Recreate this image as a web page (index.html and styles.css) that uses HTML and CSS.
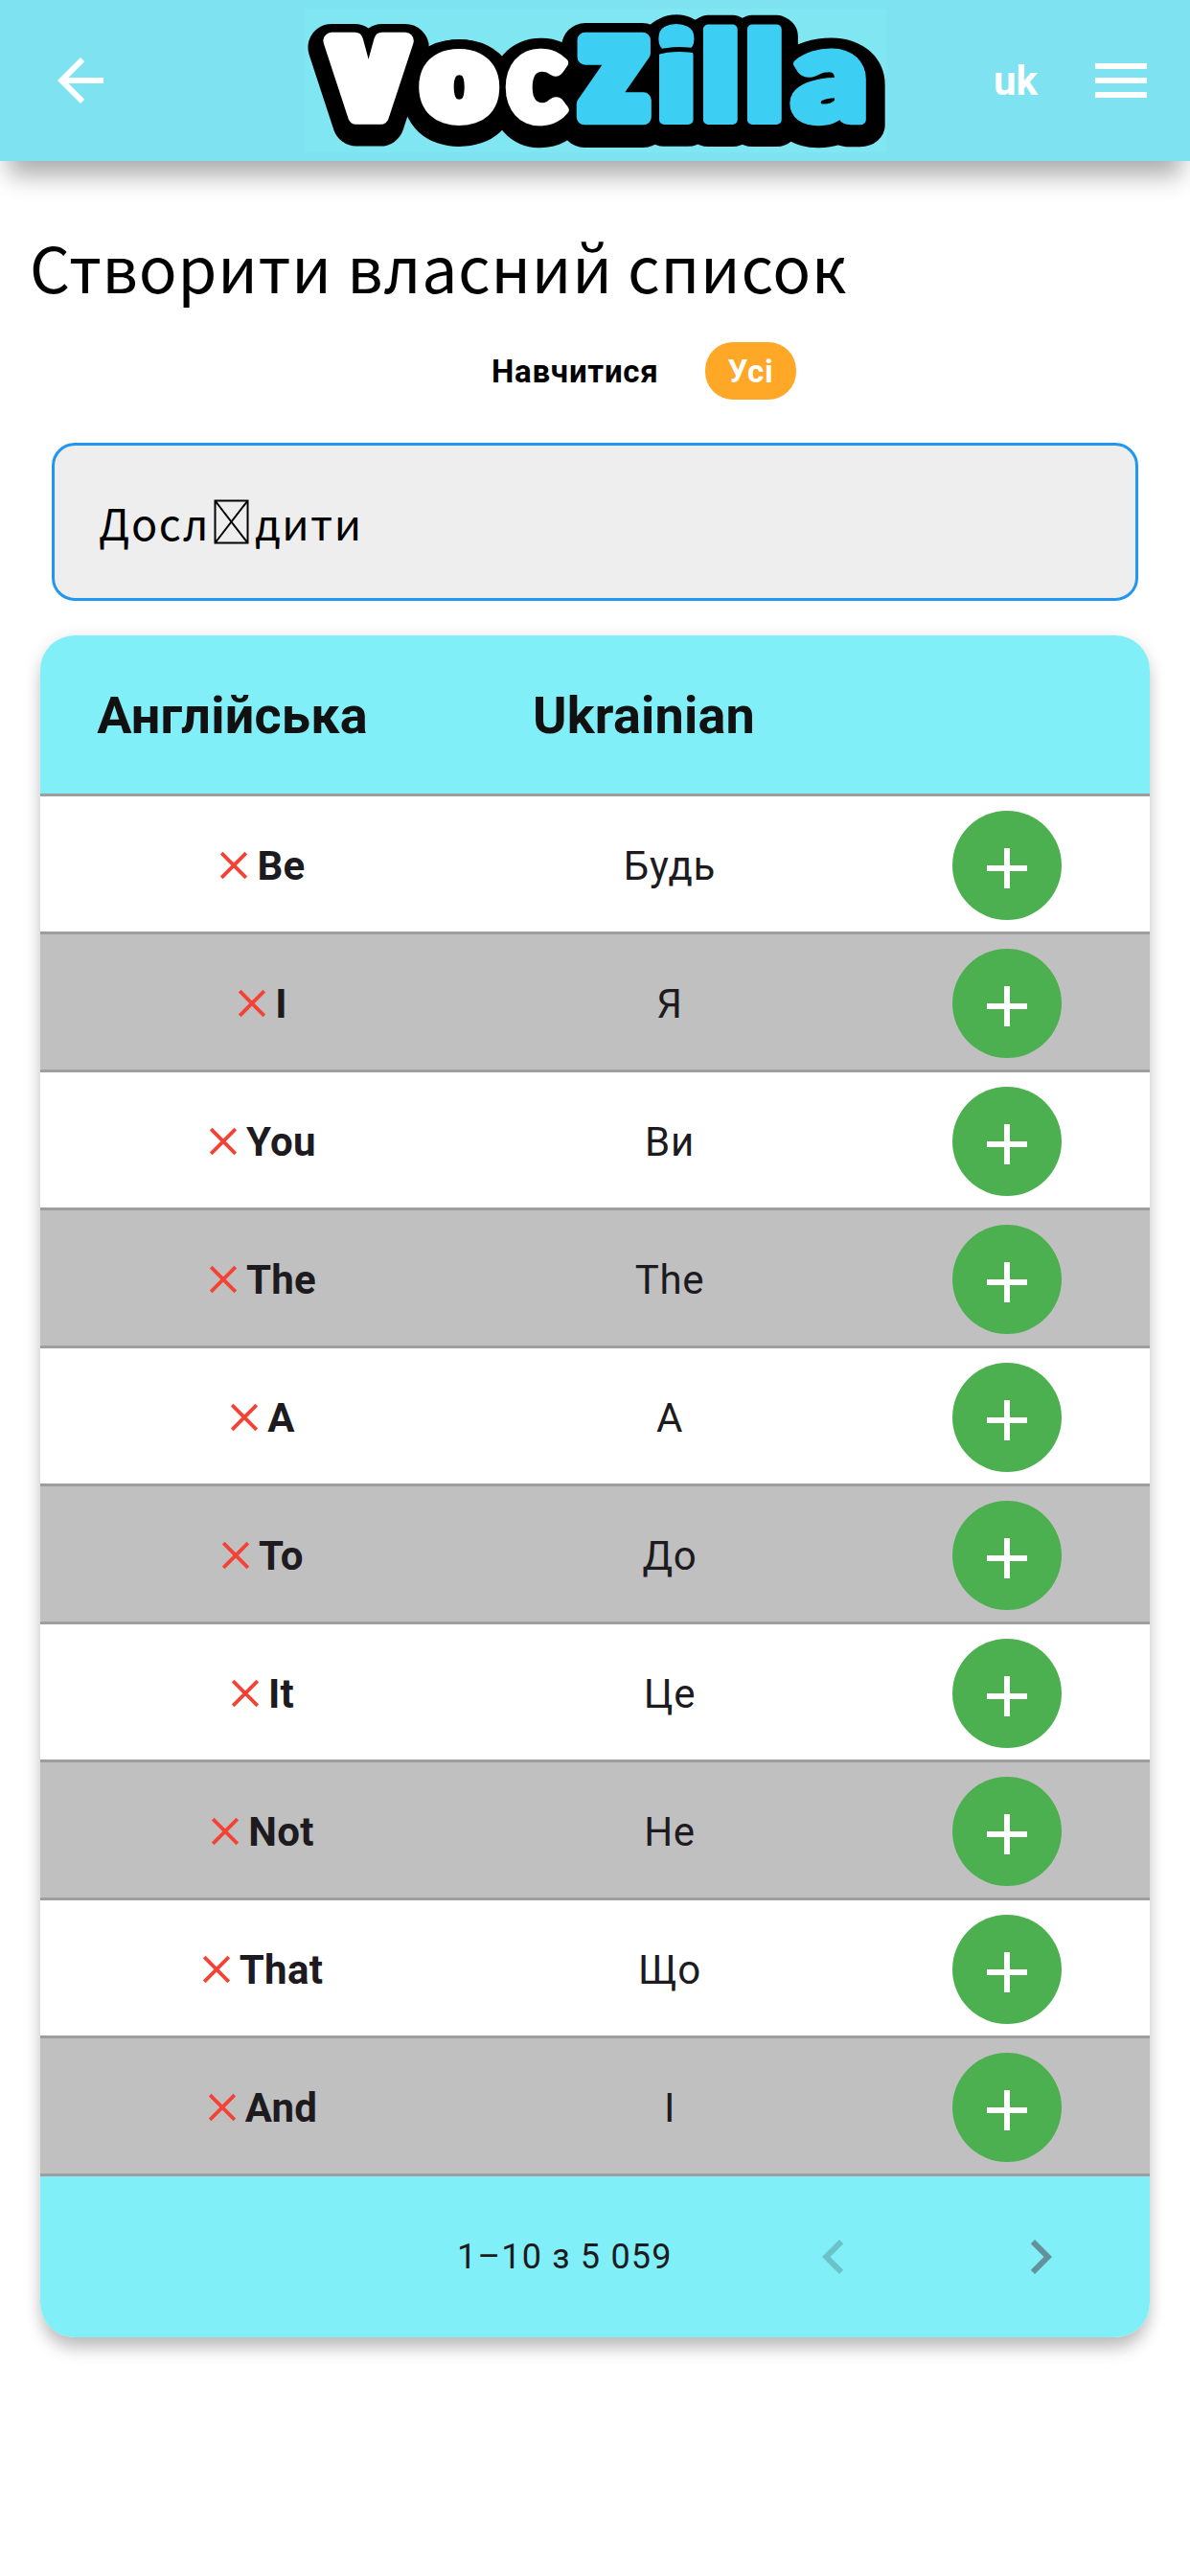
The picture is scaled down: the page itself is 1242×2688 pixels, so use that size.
FILE: index.html
```html
<!DOCTYPE html>
<html lang="uk">
<head>
<meta charset="utf-8">
<title>VocZilla</title>
<link rel="stylesheet" href="styles.css">
</head>
<body>
<svg class="sprite" aria-hidden="true">
  <symbol id="close" viewBox="0 0 48 48"><path d="M11.2 11.2 36.8 36.8M36.8 11.2 11.2 36.8" fill="none" stroke="#f44336" stroke-width="3.8"/></symbol>
  <symbol id="plus" viewBox="0 0 42 42"><path d="M21 0V42M0 21H42" fill="none" stroke="#fff" stroke-width="6"/></symbol>
</svg>
<header class="bar">
  <svg class="bar-icon back" viewBox="0 0 24 24"><path d="M20 11H7.83l5.59-5.59L12 4l-8 8 8 8 1.41-1.41L7.83 13H20v-2z"/></svg>
  <div class="logo">
    <svg viewBox="317 9 608 150" width="608" height="150" role="img" aria-label="VocZilla">
      <defs>
        <g id="voc">
          <text class="thick" transform="translate(346.3 121.3) scale(1.105 1.092)">V</text>
          <text transform="translate(437 124.8) scale(1.328 1.231)">o</text>
          <text class="round" transform="translate(529 124.8) scale(1.264 1.311)">c</text>
        </g>
        <g id="zilla">
          <text class="thick" transform="translate(606.8 122) scale(1.105 1.11)">Z</text>
          <text transform="translate(684.4 125.1) scale(1.31 1.224)">i</text>
          <text transform="translate(730.4 125) scale(1.321 1.238)">l</text>
          <text transform="translate(776.4 125) scale(1.321 1.238)">l</text>
          <text class="round" transform="translate(827.3 124.7) scale(1.528 1.311)">a</text>
        </g>
      </defs>
      <g class="logo-outline"><use href="#voc" y="6.5"/><use href="#zilla" y="6.5"/></g>
      <g class="logo-core"><use href="#voc"/><use href="#zilla"/></g>
      <use class="logo-voc" href="#voc"/>
      <use class="logo-zilla" href="#zilla"/>
      <path d="M684 55Q704 49 728 53" fill="none" stroke="#000" stroke-width="5"/>
    </svg>
  </div>
  <span class="lang">uk</span>
  <svg class="bar-icon" viewBox="0 0 24 24"><path d="M3 18h18v-2H3v2zm0-5h18v-2H3v2zm0-7v2h18V6H3z"/></svg>
</header>
<main>
  <h1>Створити власний список</h1>
  <div class="filters"><span class="chip">Навчитися</span><span class="chip active">Усі</span></div>
  <div class="search"><span>Досл</span><svg class="missing" viewBox="0 0 37 47"><path d="M1.5 1.5h34v44h-34zL35.5 45.5M35.5 1.5 1.5 45.5"/></svg><span>дити</span></div>
  <section class="card">
    <div class="row head"><div>Англійська</div><div>Ukrainian</div><div></div></div>
    <div class="row"><div class="word"><svg><use href="#close"/></svg>Be</div><div>Будь</div><div><span class="add"><svg><use href="#plus"/></svg></span></div></div>
    <div class="row"><div class="word"><svg><use href="#close"/></svg>I</div><div>Я</div><div><span class="add"><svg><use href="#plus"/></svg></span></div></div>
    <div class="row"><div class="word"><svg><use href="#close"/></svg>You</div><div>Ви</div><div><span class="add"><svg><use href="#plus"/></svg></span></div></div>
    <div class="row"><div class="word"><svg><use href="#close"/></svg>The</div><div>The</div><div><span class="add"><svg><use href="#plus"/></svg></span></div></div>
    <div class="row"><div class="word"><svg><use href="#close"/></svg>A</div><div>А</div><div><span class="add"><svg><use href="#plus"/></svg></span></div></div>
    <div class="row"><div class="word"><svg><use href="#close"/></svg>To</div><div>До</div><div><span class="add"><svg><use href="#plus"/></svg></span></div></div>
    <div class="row"><div class="word"><svg><use href="#close"/></svg>It</div><div>Це</div><div><span class="add"><svg><use href="#plus"/></svg></span></div></div>
    <div class="row"><div class="word"><svg><use href="#close"/></svg>Not</div><div>Не</div><div><span class="add"><svg><use href="#plus"/></svg></span></div></div>
    <div class="row"><div class="word"><svg><use href="#close"/></svg>That</div><div>Що</div><div><span class="add"><svg><use href="#plus"/></svg></span></div></div>
    <div class="row"><div class="word"><svg><use href="#close"/></svg>And</div><div>І</div><div><span class="add"><svg><use href="#plus"/></svg></span></div></div>
    <footer class="pager">
      <span class="range">1–10 з 5 059</span>
      <svg class="chevron off" viewBox="0 0 24 24"><path d="M15.41 7.41 14 6l-6 6 6 6 1.41-1.41L10.83 12z"/></svg>
      <svg class="chevron" viewBox="0 0 24 24"><path d="M10 6 8.59 7.41 13.17 12l-4.58 4.59L10 18l6-6z"/></svg>
    </footer>
  </section>
</main>
</body>
</html>
```
FILE: styles.css
```css
* { box-sizing: border-box; }
body { margin: 0; min-height: 2688px; background: #fff; font-family: Roboto, sans-serif; color: #1d1b20; }
svg { display: block; flex: none; }
.sprite { display: none; }

.bar { display: flex; align-items: center; height: 168px; padding: 0 36px 0 48px; background: #7ee2f0; box-shadow: 0 24px 24px -9px rgba(0, 0, 0, .33); }
.bar-icon { width: 72px; height: 72px; fill: #fff; }
.logo { margin-left: 197px; width: 608px; height: 150px; background: #80e7f2; }
.logo text { font-family: "Open Sans", sans-serif; font-weight: 800; font-size: 100px; }
.logo text.round { font-family: Lato, sans-serif; font-weight: 900; }
.logo text.thick { stroke-width: var(--thick); }
.logo-outline { --thick: 45px; fill: #000; stroke: #000; stroke-width: 34px; stroke-linejoin: round; }
.logo-core { --thick: 30px; fill: #000; stroke: #000; stroke-width: 24px; stroke-linejoin: round; }
.logo-voc { --thick: 16px; fill: #fff; stroke: #fff; stroke-width: 8px; stroke-linejoin: round; }
.logo-zilla { --thick: 15px; fill: #3dcff3; stroke: #3dcff3; stroke-width: 8px; stroke-linejoin: round; }
.lang { margin-left: 112px; margin-right: auto; color: #fff; font-size: 42px; font-weight: 700; }

h1 { margin: 67px 0 0 31px; font: 400 66px/84px "Noto Sans CJK JP", sans-serif; letter-spacing: .75px; color: #000; }
.filters { display: flex; gap: 24px; margin: 38px 0 0 489px; }
.chip { height: 60px; padding: 0 24px; border-radius: 29px; font-size: 33px; line-height: 61px; font-weight: 700; letter-spacing: .75px; color: #000; }
.chip.active { background: #ffa726; color: #fff; }
.search { display: flex; align-items: center; height: 165px; margin: 45px 54px 0; padding-left: 46px; border: 3px solid #2196f3; border-radius: 24px; background: #eee; font: 400 45px/66px "Noto Sans CJK JP", sans-serif; letter-spacing: 1.5px; color: #000; }
.missing { width: 37px; height: 47px; margin: 0 6px 0 4px; fill: none; stroke: #000; stroke-width: 2; }

.card { margin: 36px 42px 0; border-radius: 36px; overflow: hidden; box-shadow: 0 15px 18px -3px rgba(0, 0, 0, .2), 0 3px 18px rgba(0, 0, 0, .12); }
.row { display: grid; grid-template-columns: 455px 404px 1fr; height: 144px; padding-top: 3px; border-bottom: 3px solid #9e9e9e; background: #fff; font-size: 42px; letter-spacing: .75px; }
.row:nth-child(odd) { background: #c0c0c0; }
.row > div { display: flex; align-items: center; justify-content: center; }
.row.head { height: 168px; padding-top: 2px; background: #80eff7; color: #111; font-size: 54px; font-weight: 700; letter-spacing: .2px; }
.row.head > div { padding-right: 54px; }
.row > .word { font-weight: 700; letter-spacing: .3px; }
.word svg { width: 48px; height: 48px; }
.add { display: flex; align-items: center; justify-content: center; width: 114px; height: 114px; padding-top: 6px; border-radius: 50%; background: #4caf50; }
.add svg { width: 42px; height: 42px; }
.pager { display: flex; align-items: center; height: 168px; background: #80eff7; font-size: 36px; letter-spacing: 1.2px; }
.range { width: 357px; margin-left: 435px; white-space: nowrap; }
.chevron { width: 72px; height: 72px; fill: #63929a; }
.chevron.off { margin-right: 144px; fill: #6bc3ca; }
```
